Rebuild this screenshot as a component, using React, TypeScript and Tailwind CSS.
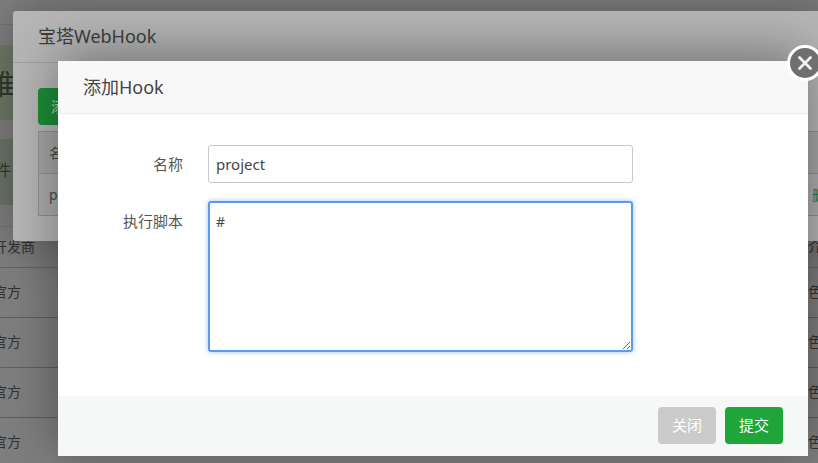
const font = 'font-["Noto_Sans","Noto_Sans_CJK_SC",sans-serif]';

function PageRow({ left, right }: { left: string; right: string }) {
  return (
    <div className="flex h-[50px] items-center justify-between border-b border-[#5e5e5e] pb-[2px] text-[14px] text-[#333]">
      <span className="-ml-[7px]">{left}</span>
      <span className="-mr-[4px]">{right}</span>
    </div>
  );
}

function BackgroundPage() {
  return (
    <div className="absolute inset-0 overflow-hidden bg-[#7e7e7e]">
      <div className="h-[25px] border-b border-[#727272]" />
      <div className="h-[20px]" />
      <div className="h-[75px] bg-[#6f7866] pt-[22px] text-[28px] leading-[34px] text-[#2f3a2f]">
        <span className="-ml-[13px] inline-block">维</span>
      </div>
      <div className="h-[19px]" />
      <div className="h-[66px] bg-[#6b7567] pt-[19px] text-[16px] text-[#2f3a2f]">
        <span className="-ml-[5px] inline-block">件</span>
      </div>
      <div className="h-[22px] border-b border-[#727272]" />
      <div className="flex h-[41px] items-center justify-between border-b border-[#666] pb-[2px] text-[14px] text-[#333]">
        <span className="-ml-[7px]">开发商</span>
        <span className="-mr-[18px]">介绍</span>
      </div>
      <PageRow left="官方" right="绿色" />
      <PageRow left="官方" right="绿色" />
      <PageRow left="官方" right="绿色" />
      <PageRow left="官方" right="绿色" />
    </div>
  );
}

function WebHookLayer() {
  return (
    <div className="absolute left-[13px] top-[11px] h-[230px] w-[820px] overflow-hidden rounded-[3px] bg-[#b6b6b6] shadow-[1px_1px_50px_rgba(0,0,0,0.3)]">
      <div className="flex h-[52px] items-center border-b border-[#a0a0a0] pl-[25px] text-[18px] text-[#3f3f3f]">
        宝塔WebHook
      </div>
      <div className="px-[25px] pt-[25px]">
        <div className="flex h-[37px] w-[80px] items-center rounded-[4px] bg-[#1c8d36] pl-[13px] text-[14px] text-[#b8d8bf]">
          添加
        </div>
        <div className="mt-[6px] h-[85px] w-[820px] border border-[#909090] bg-[#adadad] text-[14px] text-[#4c4c4c]">
          <div className="flex h-[42px] items-center border-b border-[#909090] bg-[#a6a6a6] pl-[10px]">名称</div>
          <div className="flex h-[41px] items-center justify-between pl-[10px]">
            <span>project</span>
            <span className="mr-[17px] text-[#2f7a42]">删除</span>
          </div>
        </div>
      </div>
    </div>
  );
}

export default function App() {
  return (
    <div className={`relative h-[463px] w-[818px] overflow-hidden ${font}`}>
      <BackgroundPage />
      <WebHookLayer />
      <div className="absolute left-[58px] top-[61px] flex h-[395px] w-[750px] flex-col bg-white shadow-[0_-8px_50px_rgba(0,0,0,0.38)]">
        <div className="flex h-[53px] items-center border-b border-[#eeeeee] bg-[#f8f8f8] pl-[25px] text-[18px] text-[#444]">
          添加Hook
        </div>
        <div className="flex-1 pt-[31px]">
          <div className="flex items-center">
            <label className="w-[125px] text-right text-[15px] text-[#555]">名称</label>
            <input
              readOnly
              value="project"
              className="ml-[25px] h-[38px] w-[425px] rounded-[3px] border border-[#c8c8c8] px-[7px] text-[15px] text-[#444] outline-none"
            />
          </div>
          <div className="mt-[18px] flex items-start">
            <label className="w-[125px] pt-[9px] text-right text-[15px] leading-[22px] text-[#555]">执行脚本</label>
            <textarea
              readOnly
              value="#"
              className="ml-[25px] block h-[151px] w-[425px] rounded-[3px] border-2 border-[#5b9bea] px-[6px] py-[9px] text-[14px] leading-[20px] text-[#444] shadow-[0_0_5px_rgba(91,155,234,0.6)] outline-none"
            />
          </div>
        </div>
        <div className="flex h-[60px] items-center justify-end gap-[9px] bg-[#f6f8f8] pb-[2px] pr-[25px]">
          <button className="h-[37px] w-[58px] rounded-[4px] bg-[#cbcbcb] text-[15px] text-white">关闭</button>
          <button className="h-[37px] w-[58px] rounded-[4px] bg-[#20a53a] text-[15px] text-white">提交</button>
        </div>
      </div>
      <div className="absolute left-[787px] top-[45px] flex h-[36px] w-[36px] items-center justify-center rounded-full border-[3px] border-white bg-[#6f6f6f]">
        <svg width="18" height="18" viewBox="0 0 18 18" fill="none" stroke="#f2f2f2" strokeWidth="2.8" strokeLinecap="round">
          <path d="M3.5 3.5 14.5 14.5M14.5 3.5 3.5 14.5" />
        </svg>
      </div>
    </div>
  );
}
